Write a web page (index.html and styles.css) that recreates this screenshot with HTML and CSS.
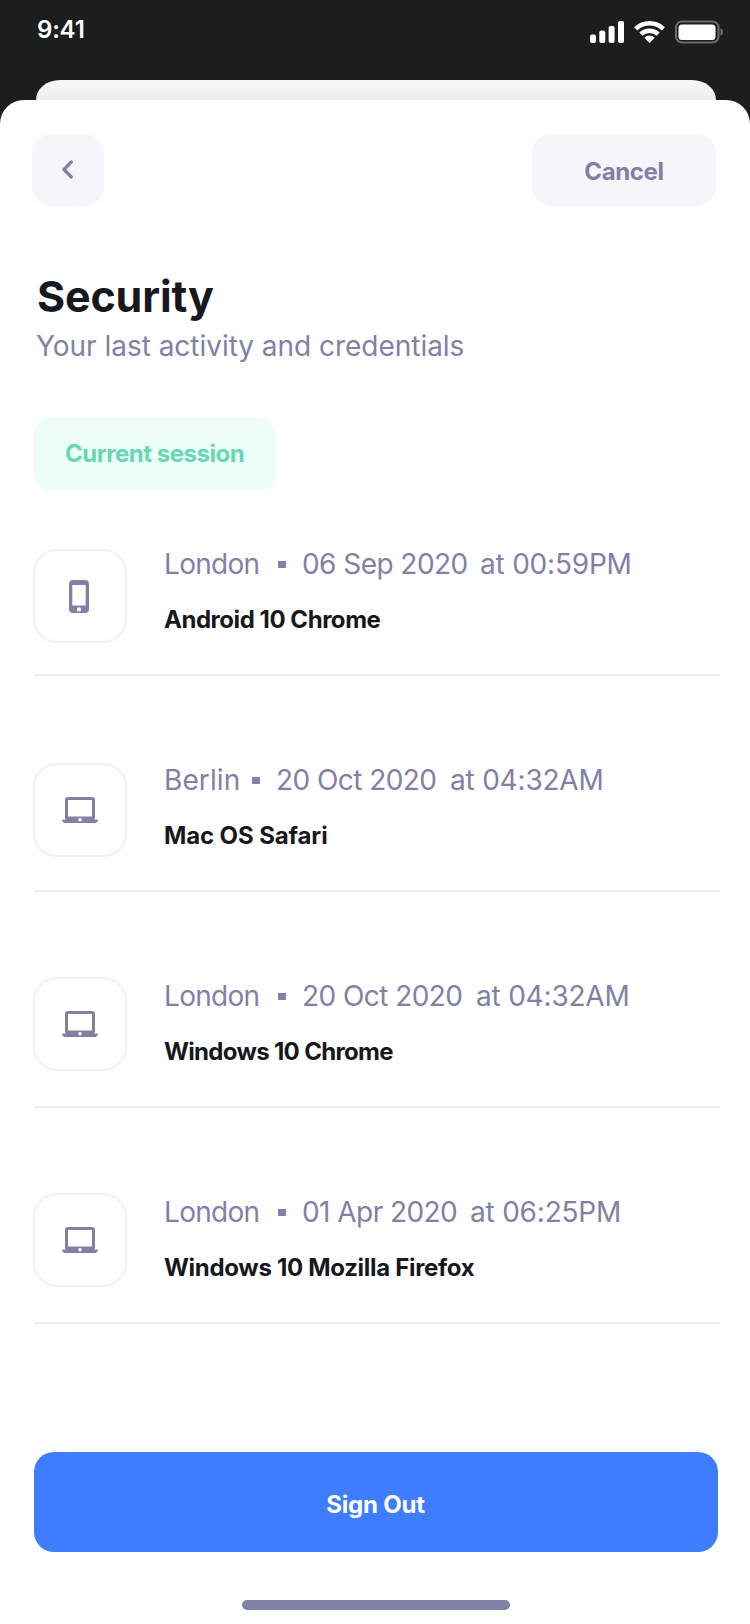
FILE: index.html
```html
<!DOCTYPE html>
<html lang="en">
<head>
<meta charset="utf-8">
<title>Security</title>
<link rel="stylesheet" href="styles.css">
</head>
<body>
<svg class="sprite" aria-hidden="true">
  <symbol id="phone" viewBox="0 0 20 33"><path fill-rule="evenodd" d="M4 0h12a4 4 0 0 1 4 4v25a4 4 0 0 1-4 4H4a4 4 0 0 1-4-4V4a4 4 0 0 1 4-4zM3.300 5v20.500h13.400V5zM10 27.200a2.200 2.200 0 1 0 0 4.400 2.200 2.200 0 0 0 0-4.400z"/></symbol>
  <symbol id="laptop" viewBox="0 0 36 26"><path fill-rule="evenodd" d="M6 0h24a3 3 0 0 1 3 3v17a2.500 2.500 0 0 1-1 2.500h4c0 2-1.500 3.500-3 3.500H3c-1.500 0-3-1.500-3-3.500h4A2.500 2.500 0 0 1 3 20V3a3 3 0 0 1 3-3zM6 3v16.500h24V3zM18 21a1.800 1.800 0 1 0 0 3.600 1.800 1.800 0 0 0 0-3.600z"/></symbol>
</svg>
<div class="screen">
  <header class="status">
    <span class="clock">9:41</span>
    <div class="indicators">
      <svg width="34" height="22" viewBox="0 0 34 22" fill="#fff"><rect y="13.500" width="6" height="8.500" rx="2"/><rect x="9.300" y="9.500" width="6" height="12.500" rx="2"/><rect x="18.600" y="5" width="6" height="17" rx="2"/><rect x="28" width="6" height="22" rx="2"/></svg>
      <svg width="31" height="23" viewBox="0 0 31 23"><g fill="none" stroke="#fff" stroke-width="4.600"><path d="M1.700 8.900a19.800 19.800 0 0 1 27.600 0"/><path d="M6.900 14.200a12.300 12.300 0 0 1 17.200 0"/></g><path d="M10.300 17.700a7.500 7.500 0 0 1 10.400 0L15.500 23z" fill="#fff"/></svg>
      <svg width="49" height="24" viewBox="0 0 49 24"><rect x="1" y="1.500" width="42.500" height="21" rx="6" fill="none" stroke="#6b6c6b" stroke-width="2"/><rect x="3.500" y="4.500" width="37" height="15.500" rx="3.500" fill="#fff"/><path d="M45.500 8c3.300 1.500 3.300 6.500 0 8z" fill="#6b6c6b"/></svg>
    </div>
  </header>
  <div class="sheet-back"></div>
  <main class="sheet">
    <nav class="toolbar">
      <button class="btn back" aria-label="Back"><svg width="11" height="19" viewBox="0 0 11 19"><path d="M9.300 2 2 9.500 9.300 17" fill="none" stroke="currentColor" stroke-width="3.300" stroke-linecap="round" stroke-linejoin="round"/></svg></button>
      <button class="btn cancel">Cancel</button>
    </nav>
    <h1 class="title">Security</h1>
    <p class="subtitle">Your last activity and credentials</p>
    <div class="badge"><span>Current session</span></div>
    <ul class="sessions">
      <li class="session">
        <div class="device device-1"><svg width="20" height="33"><use href="#phone"/></svg></div>
        <div class="info"><div class="meta"><span class="city">London</span><i class="dot"></i><span class="date">06 Sep 2020</span><span class="time">at 00:59PM</span></div><div class="agent">Android 10 Chrome</div></div>
      </li>
      <li class="session">
        <div class="device device-2"><svg width="36" height="26"><use href="#laptop"/></svg></div>
        <div class="info"><div class="meta meta-berlin"><span class="city">Berlin</span><i class="dot"></i><span class="date">20 Oct 2020</span><span class="time">at 04:32AM</span></div><div class="agent agent-2">Mac OS Safari</div></div>
      </li>
      <li class="session">
        <div class="device device-3"><svg width="36" height="26"><use href="#laptop"/></svg></div>
        <div class="info"><div class="meta"><span class="city">London</span><i class="dot"></i><span class="date date-3">20 Oct 2020</span><span class="time">at 04:32AM</span></div><div class="agent agent-3">Windows 10 Chrome</div></div>
      </li>
      <li class="session">
        <div class="device device-4"><svg width="36" height="26"><use href="#laptop"/></svg></div>
        <div class="info"><div class="meta"><span class="city">London</span><i class="dot"></i><span class="date date-4">01 Apr 2020</span><span class="time">at 06:25PM</span></div><div class="agent agent-4">Windows 10 Mozilla Firefox</div></div>
      </li>
    </ul>
    <button class="signout">Sign Out</button>
    <div class="home"></div>
  </main>
</div>
</body>
</html>
```
FILE: styles.css
```css
* { box-sizing: border-box; }
body { margin: 0; background: #1c1e1d; font-family: Inter, "Liberation Sans", sans-serif; color: #17181d; }
button { border: 0; padding: 0; font: inherit; }
svg { display: block; flex: none; }
.sprite { position: absolute; width: 0; height: 0; }
.screen { width: 750px; height: 1624px; overflow: hidden; background: #1c1e1d; display: flex; flex-direction: column; }
.status { height: 80px; display: flex; justify-content: space-between; padding: 20px 26px 0 37px; color: #fff; }
.clock { font-size: 24px; line-height: 20px; font-weight: 600; letter-spacing: -.2px; }
.indicators { display: flex; align-items: flex-start; gap: 10px; }
.indicators svg:first-child { margin-top: 1px; }
.sheet-back { height: 20px; flex: none; margin: 0 34px 0 36px; border-radius: 24px 24px 0 0 / 20px 20px 0 0; background: linear-gradient(#f6f6f6, #eee); }
.sheet { flex: 1; background: #fff; border-radius: 24px 24px 0 0; padding: 34px 30px 0 34px; display: flex; flex-direction: column; }
.toolbar { display: flex; justify-content: space-between; margin: 0 4px 0 -2px; }
.btn { height: 72px; border-radius: 20px; background: #f5f5fa; color: #8181a5; display: flex; align-items: center; justify-content: center; }
.back { width: 72px; padding: 0 2px 1px 0; }
.cancel { width: 184px; font-size: 24px; font-weight: 700; letter-spacing: -.35px; padding-top: 3px; }
.title { margin: 65px 0 0 3px; height: 50px; font-size: 43px; line-height: 50px; font-weight: 700; letter-spacing: -.15px; white-space: nowrap; }
.subtitle { margin: 8px 0 0 2px; height: 34px; font-size: 28px; line-height: 34px; letter-spacing: -.03px; color: #8181a5; white-space: nowrap; }
.badge { margin-top: 55px; width: 242px; height: 72px; border-radius: 16px; background: #edfdf8; color: #67d8b0; display: flex; align-items: center; padding: 0 0 2px 31px; font-size: 24px; font-weight: 700; letter-spacing: -.48px; white-space: nowrap; }
.sessions { list-style: none; margin: 0; padding: 0; width: 686px; }
.session { height: 216px; border-bottom: 2px solid #efeff0; display: flex; gap: 37px; }
.session:first-child { height: 186px; }
.session:first-child .info { padding-top: 57px; }
.device { width: 94px; height: 94px; margin-left: -1px; border: 2px solid #f0f0f1; border-radius: 24px; display: flex; align-items: center; justify-content: center; fill: #8181a5; }
.device-1 { margin-top: 59px; }
.device-1 svg { margin-right: 2px; }
.device-2 { margin-top: 87px; }
.device-3 { margin-top: 85px; }
.device-4 { margin-top: 85px; }
.info { padding-top: 87px; white-space: nowrap; }
.meta { height: 34px; display: flex; align-items: baseline; font-size: 28px; line-height: 34px; color: #8181a5; }
.city { width: 114px; letter-spacing: -.7px; }
.meta-berlin .city { width: 88px; letter-spacing: .1px; }
.dot { width: 8px; height: 7px; margin-right: 16px; background: #8181a5; transform: translateY(-6px); }
.date { width: 178px; letter-spacing: -.55px; }
.date-3 { width: 174px; }
.date-4 { width: 168px; }
.meta-berlin .date { width: 174px; }
.time { letter-spacing: -.2px; }
.agent { margin-top: 23px; font-size: 24px; line-height: 32px; font-weight: 700; letter-spacing: -.46px; color: #17181d; }
.agent-2 { letter-spacing: -.12px; }
.agent-3 { letter-spacing: -.68px; }
.agent-4 { letter-spacing: -.31px; }
.signout { margin: 128px 2px 0 0; height: 100px; flex: none; border-radius: 20px; background: #3e7dff; color: #fff; font-size: 24px; font-weight: 700; letter-spacing: -.2px; padding: 4px 1px 0 0; }
.home { width: 268px; height: 10px; margin: 48px 0 0 208px; border-radius: 5px; background: #8181a5; }
```
